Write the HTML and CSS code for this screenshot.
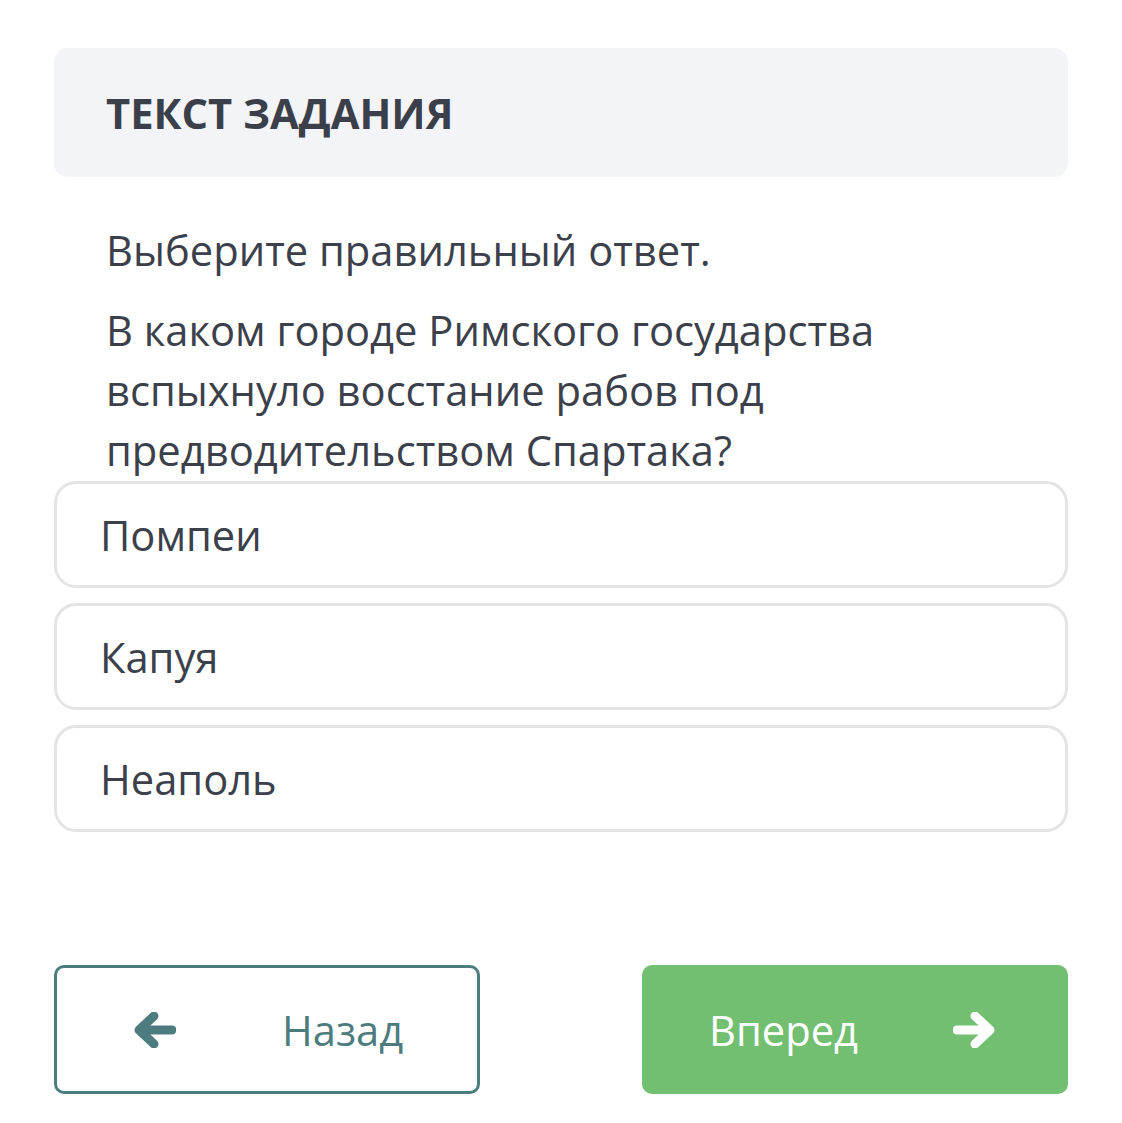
FILE: index.html
```html
<!DOCTYPE html>
<html lang="ru">
<head>
<meta charset="utf-8">
<link rel="stylesheet" href="styles.css">
</head>
<body>
<div class="page">
  <div class="header">
    <h1 class="title">ТЕКСТ ЗАДАНИЯ</h1>
  </div>
  <div class="task">
    <p class="instr">Выберите правильный ответ.</p>
    <p class="question">В каком городе Римского государства вспыхнуло восстание рабов под предводительством Спартака?</p>
  </div>
  <div class="options">
    <div class="option">Помпеи</div>
    <div class="option">Капуя</div>
    <div class="option">Неаполь</div>
  </div>
  <div class="nav">
    <button class="btn btn-back">
      <svg class="arrow" viewBox="0 0 42 36" width="42" height="36"><path d="M38 18H8M20 4L5 18L20 32" fill="none" stroke="currentColor" stroke-width="9" stroke-linecap="round" stroke-linejoin="round"/></svg>
      <span class="btn-label">Назад</span>
    </button>
    <button class="btn btn-next">
      <span class="btn-label">Вперед</span>
      <svg class="arrow" viewBox="0 0 42 36" width="42" height="36"><path d="M4 18H34M22 4L37 18L22 32" fill="none" stroke="currentColor" stroke-width="9" stroke-linecap="round" stroke-linejoin="round"/></svg>
    </button>
  </div>
</div>
</body>
</html>
```

FILE: styles.css
```css
html, body {
  margin: 0;
  padding: 0;
  background: #ffffff;
}
body {
  font-family: "Open Sans", "Liberation Sans", sans-serif;
  color: #3b404b;
}
.page {
  width: 1014px;
  padding: 48px 0 0 54px;
}
.header {
  background: #f3f4f7;
  border-radius: 14px;
  height: 129px;
  display: flex;
  align-items: center;
  padding-left: 52px;
  box-sizing: border-box;
}
.title {
  margin: 0;
  font-size: 41.7px;
  font-weight: 700;
  color: #3a3f4a;
  letter-spacing: 0;
}
.task {
  padding: 43px 52px 0 52px;
}
.instr {
  margin: 0;
  font-size: 41.7px;
  line-height: 60px;
}
.question {
  margin: 20px 0 0 0;
  font-size: 41.7px;
  line-height: 60px;
}
.options {
  display: flex;
  flex-direction: column;
  gap: 15px;
  margin-top: 1px;
}
.option {
  height: 107px;
  box-sizing: border-box;
  border: 3px solid #e4e4e6;
  border-radius: 22px;
  display: flex;
  align-items: center;
  padding-left: 43px;
  font-size: 41.7px;
  color: #3b404b;
}
.nav {
  display: flex;
  justify-content: space-between;
  margin-top: 133px;
}
.btn {
  width: 426px;
  height: 129px;
  box-sizing: border-box;
  border-radius: 10px;
  font-family: "Open Sans", "Liberation Sans", sans-serif;
  font-size: 41.7px;
  display: flex;
  align-items: center;
  cursor: pointer;
  padding: 0;
}
.btn-back {
  background: #ffffff;
  border: 3px solid #4d7c7e;
  color: #4d7c7e;
  padding-left: 77px;
}
.btn-back .btn-label {
  margin-left: 106px;
}
.btn-next {
  background: #72bf72;
  border: none;
  color: #ffffff;
  padding-left: 67px;
}
.btn-next .btn-label {
  margin-right: 95px;
}
.arrow {
  display: block;
  flex: none;
}
```
